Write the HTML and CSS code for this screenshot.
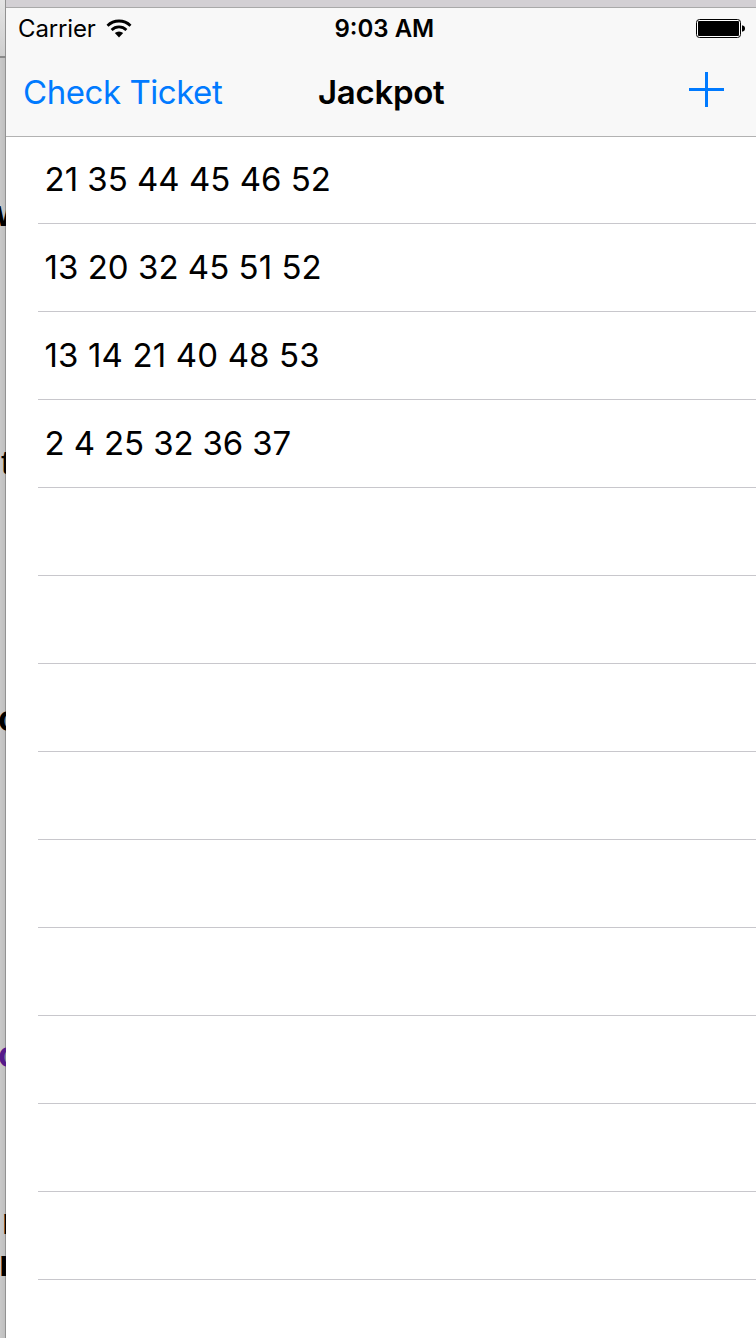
FILE: index.html
```html
<!DOCTYPE html>
<html lang="en">
<head>
<meta charset="utf-8">
<title>Jackpot</title>
<link rel="stylesheet" href="styles.css">
</head>
<body>
<div class="desktop">
  <aside class="behind" aria-hidden="true">
    <span class="peek peek-w">w</span>
    <span class="peek peek-t">t</span>
    <span class="peek peek-o">o</span>
    <span class="peek peek-link">o</span>
    <span class="peek peek-l">r</span>
    <span class="peek peek-r">r</span>
  </aside>
  <main class="window">
    <div class="titlebar"></div>
    <header class="header">
      <div class="status">
        <div class="carrier">
          <span>Carrier</span>
          <svg class="wifi" width="26" height="20" viewBox="0 0 26 20">
            <path d="M1.5 6.7A16.4 16.4 0 0 1 24.5 6.7" fill="none" stroke="#000" stroke-width="2.8"/>
            <path d="M5.6 10.9A10.7 10.7 0 0 1 20.4 10.9" fill="none" stroke="#000" stroke-width="2.8"/>
            <path d="M8.8 14.1A6.4 6.4 0 0 1 17.2 14.1L13 18.5Z"/>
          </svg>
        </div>
        <span class="time">9:03 AM</span>
        <svg class="battery" width="50" height="20" viewBox="0 0 50 20">
          <rect x=".5" y=".5" width="44" height="18" rx="3" fill="#fff" stroke="#000"/>
          <rect x="2" y="2" width="41" height="15" rx="1"/>
          <path d="M46 6.2Q49 6.8 49 9.5T46 12.8Z"/>
        </svg>
      </div>
      <nav class="nav">
        <a class="check">Check Ticket</a>
        <h1 class="title">Jackpot</h1>
        <svg class="add" width="35" height="35" viewBox="0 0 35 35"><path d="M0 17.5H35M17.5 0V35" stroke="#007aff" stroke-width="3"/></svg>
      </nav>
    </header>
    <ul class="list">
      <li class="row"><span class="r1">21 35 44 45 46 52</span></li>
      <li class="row"><span class="r2">13 20 32 45 51 52</span></li>
      <li class="row"><span class="r3">13 14 21 40 48 53</span></li>
      <li class="row"><span class="r4">2 4 25 32 36 37</span></li>
      <li class="row"></li><li class="row"></li><li class="row"></li>
      <li class="row"></li><li class="row"></li><li class="row"></li>
      <li class="row"></li><li class="row"></li><li class="row"></li>
    </ul>
  </main>
</div>
</body>
</html>
```
FILE: styles.css
```css
* { box-sizing: border-box; }
body { margin: 0; background: #fff; color: #000; font-family: Inter, "Liberation Sans", sans-serif; }
.desktop { display: flex; width: 756px; height: 1338px; overflow: hidden; }
.behind {
  position: relative; flex: 0 0 6px; overflow: hidden;
  background: linear-gradient(#8a8a8a, #8a8a8a) 0 56px / 6px 2px no-repeat,
    linear-gradient(#929292, #929292) 5px 0 / 1px 100% no-repeat,
    linear-gradient(#e4e4e4, #cfcfcf) 0 0 / 6px 56px no-repeat,
    linear-gradient(90deg, #c9c9c9, #bdbdbd);
}
.peek { position: absolute; font: bold 36px/32px "Liberation Sans", Arial, sans-serif; }
.peek-w { left: -4px; top: 198px; }
.peek-t { left: 1px; top: 446px; font-size: 34px; font-weight: normal; }
.peek-o { left: -2px; top: 703px; }
.peek-link { left: -2px; top: 1039px; color: #551a8b; }
.peek-l { left: 2px; top: 1206px; }
.peek-r { left: -1px; top: 1248px; }
.window { flex: 1; background: #fff; }
.titlebar { height: 8px; background: #d3d0d4; border-bottom: 1px solid #a9a9a9; }
.header { height: 129px; background: #f8f8f8; border-bottom: 1px solid #b2b2b2; }
.status { display: grid; grid-template-columns: 316.5px 1fr 50px; height: 40px; padding: 1px 10px 0 12px; align-items: center; font-size: 24px; line-height: 40px; }
.carrier { display: flex; align-items: center; gap: 10px; letter-spacing: -.15px; }
.wifi { display: block; }
.time { font-weight: 600; }
.battery { display: block; }
.nav { display: grid; grid-template-columns: 295px 1fr 35px; height: 88px; padding: 0 32px 0 17px; align-items: center; font-size: 33px; line-height: 40px; }
.check { color: #007aff; letter-spacing: -.45px; margin-top: -1px; }
.title { margin: -1px 0 0; font-size: 33px; font-weight: 600; letter-spacing: -.3px; }
.add { display: block; margin-top: -6px; }
.list { margin: 0; padding: 0 0 0 32px; list-style: none; }
.row { display: flex; align-items: center; height: 88px; padding: 0 0 2px 6.5px; border-bottom: 1px solid #c8c7cc; font-size: 33px; line-height: 40px; }
.row:first-child { height: 87px; }
.r1 { letter-spacing: 0; }
.r2 { letter-spacing: .03px; }
.r3 { letter-spacing: .15px; }
.r4 { letter-spacing: -.12px; }
```
